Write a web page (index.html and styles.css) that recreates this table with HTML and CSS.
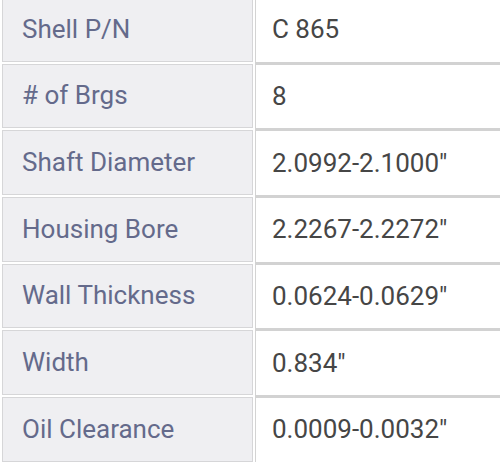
FILE: index.html
```html
<!DOCTYPE html>
<html lang="en">
<head>
<meta charset="utf-8">
<title>Shell specifications</title>
<link rel="stylesheet" href="styles.css">
</head>
<body>
<table class="specs">
  <tbody>
    <tr><th class="label">Shell P/N</th><td class="value">C 865</td></tr>
    <tr><th class="label"># of Brgs</th><td class="value">8</td></tr>
    <tr><th class="label">Shaft Diameter</th><td class="value">2.0992-2.1000"</td></tr>
    <tr><th class="label">Housing Bore</th><td class="value">2.2267-2.2272"</td></tr>
    <tr><th class="label">Wall Thickness</th><td class="value">0.0624-0.0629"</td></tr>
    <tr><th class="label">Width</th><td class="value">0.834"</td></tr>
    <tr><th class="label">Oil Clearance</th><td class="value">0.0009-0.0032"</td></tr>
  </tbody>
</table>
</body>
</html>
```
FILE: styles.css
```css
html, body {
  margin: 0;
  padding: 0;
  background: #ffffff;
  overflow: hidden;
}

.specs {
  border-collapse: separate;
  border-spacing: 2px 2px;
  width: 520px;
  margin-top: -5px;
  font-family: Roboto, "Liberation Sans", sans-serif;
  font-size: 26px;
  line-height: 1.2;
  table-layout: fixed;
}

.label {
  width: 251px;
  height: 64.67px;
  box-sizing: border-box;
  padding: 0 10px 0 19px;
  background: #efeff2;
  border: 1px solid #d6d6d8;
  color: #646a8b;
  font-weight: 400;
  text-align: left;
  vertical-align: middle;
}

.value {
  height: 64.67px;
  box-sizing: border-box;
  padding: 0 10px 0 16px;
  background: #ffffff;
  border-left: 1px solid #d3d3d3;
  border-top: 1px solid #d2d2d2;
  box-shadow: 0 2px 0 #d2d2d2;
  color: #464646;
  text-align: left;
  vertical-align: middle;
}
```
